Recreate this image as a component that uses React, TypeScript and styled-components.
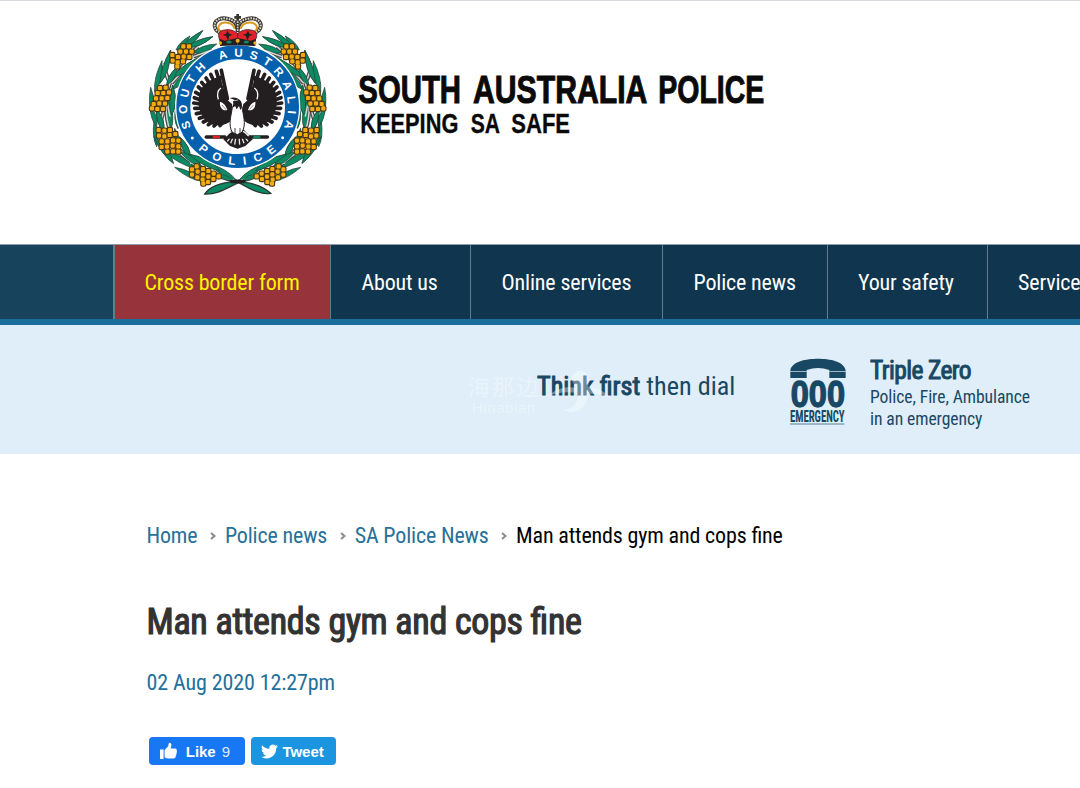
import React from 'react';
import styled, { createGlobalStyle } from 'styled-components';

const GlobalStyle = createGlobalStyle`
  * { box-sizing: border-box; }
  body {
    margin: 0;
    background: #fff;
    font-family: 'Roboto Condensed', Roboto, sans-serif;
    font-stretch: 75%;
    font-size: 22px;
    letter-spacing: -0.16px;
    font-feature-settings: 'liga' 1;
    overflow: hidden;
  }
  a { color: inherit; text-decoration: none; }
  h1, h2, p { margin: 0; font-weight: 400; }
`;

const Page = styled.div`
  width: 1080px;
  height: 788px;
  overflow: hidden;
  display: flex;
  flex-direction: column;
`;

const Header = styled.header`
  height: 244px;
  flex: none;
  padding-left: 140px;
  border-top: 1px solid #d9d9df;
`;

const Logo = styled.svg`
  display: block;
  width: 640px;
  height: 205px;
  letter-spacing: 0;
  overflow: visible;
`;

const Nav = styled.nav`
  flex: none;
  display: flex;
  height: 81px;
  padding-left: 113px;
  background: #17435c;
  border-top: 1px solid #8b9ea9;
  border-bottom: 6px solid #1b6d9c;
  white-space: nowrap;
`;

const NavItem = styled.a<{ $w: number; $alert?: boolean }>`
  flex: none;
  width: ${p => p.$w}px;
  display: flex;
  align-items: center;
  padding: 0 0 0 ${p => (p.$alert ? 29.5 : 30.5)}px;
  border-left: ${p => (p.$alert ? 2 : 1)}px solid #617e8f;
  background: ${p => (p.$alert ? '#97333a' : '#10354e')};
  color: ${p => (p.$alert ? '#fff200' : '#fff')};
`;

const Emergency = styled.section`
  position: relative;
  flex: none;
  height: 129px;
  display: flex;
  align-items: flex-start;
  padding-left: 537px;
  background: #dfeef9;
  color: #184863;
`;

const Dial = styled.p`
  width: 253px;
  padding-top: 46px;
  font-size: 26.2px;
  line-height: 30px;
  letter-spacing: 0;
`;

const Strong = styled.strong<{ $ls: number }>`
  font-weight: 400;
  letter-spacing: ${p => p.$ls}px;
  -webkit-text-stroke: 1px currentColor;
`;

const Phone = styled.svg`
  width: 56px;
  height: 68px;
  margin-top: 33px;
  letter-spacing: 0;
  overflow: visible;
`;

const Contact = styled.div`
  margin: 30px 0 0 24px;
  font-size: 17.6px;
  line-height: 22px;
  letter-spacing: -0.08px;
`;

const ContactName = styled.h2`
  font-size: 25.5px;
  line-height: 31px;
`;

const Watermark = styled.svg`
  position: absolute;
  left: 462px;
  top: 40px;
  width: 160px;
  height: 60px;
`;

const Main = styled.main`
  padding: 68px 0 0 146.5px;
`;

const Breadcrumbs = styled.nav`
  display: flex;
  align-items: center;
  line-height: 28px;
  color: #287098;
`;

const Chevron = styled.svg`
  width: 6px;
  height: 8px;
  margin: 0 9px 0 12.5px;
`;

const Current = styled.span`
  color: #000;
`;

const Title = styled.h1`
  margin-top: 48px;
  font-size: 36px;
  line-height: 48px;
  letter-spacing: -0.3px;
  color: #333;
  -webkit-text-stroke: 1.2px #333;
`;

const Stamp = styled.p`
  margin-top: 23px;
  line-height: 28px;
  letter-spacing: -0.1px;
  color: #1f709c;
`;

const Social = styled.div`
  display: flex;
  gap: 6.5px;
  margin: 40px 0 0 2.5px;
`;

const SocialButton = styled.a<{ $w: number; $bg: string }>`
  display: flex;
  align-items: center;
  width: ${p => p.$w}px;
  height: 28px;
  padding-left: 10px;
  border-radius: 4px;
  background: ${p => p.$bg};
  color: #fff;
  font: 700 15px 'Liberation Sans', Arial, sans-serif;
  svg { flex: none; }
`;

const Label = styled.span<{ $gap: number }>`
  margin-left: ${p => p.$gap}px;
  letter-spacing: -0.05px;
`;

const Count = styled.span`
  margin-left: 6px;
  font-weight: 400;
  opacity: 0.85;
`;

type Leaf = [number, number, number, number, number];

const LEAVES: Leaf[] = [
  [120, 150, 188, 92, 14], [108, 150, 150, 108, 12], [140, 142, 218, 110, 14], [160, 158, 230, 132, 16],
  [90, 235, 205, 158, 17], [95, 270, 170, 190, 18], [60, 250, 92, 150, 15], [44, 275, 66, 182, 15],
  [80, 255, 112, 200, 14], [36, 345, 32, 262, 13], [95, 345, 98, 255, 16], [50, 380, 30, 318, 13],
  [70, 395, 48, 325, 15], [92, 390, 84, 300, 16], [114, 385, 108, 320, 14], [50, 440, 42, 365, 13],
  [100, 490, 42, 410, 15], [116, 465, 104, 385, 15], [150, 475, 118, 410, 15], [165, 505, 66, 450, 16],
  [185, 500, 120, 455, 16], [180, 542, 104, 502, 14], [240, 512, 145, 462, 16], [290, 542, 200, 488, 14],
  [285, 546, 225, 520, 10],
];

const STEMS = [
  'M292 545 Q180 520 120 450 Q70 380 80 290 Q90 210 175 140',
  'M160 170 L215 150', 'M85 240 L68 190', 'M95 250 L130 210', 'M78 310 L60 372', 'M90 350 L82 310',
  'M120 460 L170 500', 'M110 450 L80 462', 'M230 518 L290 545', 'M150 490 L195 480',
];

const CLUSTERS: [number, number][][] = [
  [[130, 139], [147, 139], [121, 155], [138, 155], [155, 155], [114, 171], [131, 170], [148, 171], [97, 165], [98, 182], [113, 187], [129, 184], [112, 199]],
  [[60, 264], [77, 263], [53, 279], [70, 279], [87, 277], [48, 295], [65, 295], [82, 294], [41, 312], [58, 310], [75, 311], [52, 327], [69, 327], [36, 325]],
  [[56, 390], [73, 392], [90, 390], [57, 407], [73, 409], [89, 405], [106, 402], [65, 424], [82, 424], [99, 421], [115, 422], [65, 441], [81, 440], [98, 437], [115, 439], [82, 455], [99, 454], [115, 455]],
  [[170, 499], [156, 508], [173, 515], [189, 507], [205, 513], [156, 524], [172, 532], [189, 523], [205, 530], [221, 521], [188, 539], [204, 546], [220, 537], [236, 529], [190, 551]],
];

function leafPath([x1, y1, x2, y2, w]: Leaf) {
  const dx = x2 - x1;
  const dy = y2 - y1;
  const l = Math.hypot(dx, dy);
  const nx = (-dy / l) * w * 1.25;
  const ny = (dx / l) * w * 1.25;
  const mx = x1 + dx * 0.4;
  const my = y1 + dy * 0.4;
  return `M${x1} ${y1}Q${mx + nx} ${my + ny} ${x2} ${y2}Q${mx - nx * 0.7} ${my - ny * 0.7} ${x1} ${y1}Z`;
}

function WreathHalf() {
  return (
    <g>
      {STEMS.map(d => <path key={d} d={d} fill="none" stroke="#4a4a48" strokeWidth="12" />)}
      {LEAVES.map((l, i) => (
        <path key={i} d={leafPath(l)} fill="#0d8a63" stroke="#24483b" strokeWidth="2.4" />
      ))}
      {STEMS.map(d => <path key={d} d={d} fill="none" stroke="#d4d6d4" strokeWidth="4.500" />)}
      {LEAVES.filter((_, i) => i % 2 === 0).map((l, i) => (
        <path key={i} d={leafPath(l)} fill="#0d8a63" stroke="#24483b" strokeWidth="2" />
      ))}
      {CLUSTERS.map((c, i) => (
        <g key={i}>
          {c.map(([x, y]) => <rect key={`b${x}-${y}`} x={x - 9.5} y={y - 9.5} width="19" height="19" rx="6" fill="#4a3610" />)}
          {c.map(([x, y]) => <rect key={`f${x}-${y}`} x={x - 6.2} y={y - 6.2} width="12.4" height="12.4" rx="3.5" fill="#f3ab14" />)}
        </g>
      ))}
    </g>
  );
}

const FEATHERS: [number, number, number, number][] = [
  [262, 296, 244, 211], [256, 300, 229, 214], [250, 304, 212, 223], [245, 308, 198, 234], [240, 312, 185, 247],
  [236, 314, 175, 261], [234, 316, 167, 277], [234, 318, 163, 293], [236, 320, 161, 309], [238, 324, 164, 325],
  [240, 328, 169, 341], [244, 332, 178, 355], [248, 336, 190, 366], [254, 338, 205, 374], [260, 342, 222, 378], [266, 346, 240, 377],
];

function Wing() {
  return (
    <g>
      {FEATHERS.map(([a, b, c, d]) => (
        <line key={`${c}-${d}`} x1={a} y1={b} x2={c} y2={d} stroke="#231f20" strokeWidth="11" strokeLinecap="round" />
      ))}
      <path d="M247 225C240 255 246 290 276 312L284 350C262 382 222 380 204 367C178 348 170 310 180 274C192 244 222 236 247 225Z" fill="#231f20" />
      <path d="M243 264C234 270 231 284 235 298" fill="none" stroke="#fff" strokeWidth="4" />
      <path d="M240 305C238 322 248 334 262 330C258 316 250 308 240 305Z" fill="#fff" />
      <path d="M246 315L258 329" stroke="#231f20" strokeWidth="1.5" />
    </g>
  );
}

function CrownHalf() {
  return (
    <g>
      <path d="M246 100C208 88 222 48 262 56C282 60 292 70 292 88" fill="none" stroke="#38342e" strokeWidth="12" />
      <path d="M246 100C208 88 222 48 262 56C282 60 292 70 292 88" fill="none" stroke="#d9d4ca" strokeWidth="6" strokeDasharray="5 3" />
      <path d="M242 94C226 84 240 64 262 68C276 70 282 78 284 86" fill="none" stroke="#d99a1c" strokeWidth="6" />
      <path d="M240 120C230 104 238 90 254 90C268 86 282 92 293 100L293 128L242 132Z" fill="#e0242b" stroke="#231f20" strokeWidth="2" />
      <path d="M262 92L268 102L278 104L268 108L264 122L258 108L248 105L258 101Z" fill="#231f20" />
      <path d="M238 116L254 122L293 114L293 136L240 138Z" fill="#231f20" />
      <circle cx="241" cy="129" r="5" fill="#f3ab14" />
      <ellipse cx="267" cy="126" rx="8" ry="4.5" fill="#0d8a63" />
    </g>
  );
}

function Mirrored({ children }: { children: React.ReactNode }) {
  return (
    <>
      {children}
      <g transform="translate(586 0) scale(-1 1)">{children}</g>
    </>
  );
}

const WORDMARK: { word: string; x: number; w: number }[] = [
  { word: 'SOUTH', x: 655, w: 308 },
  { word: 'AUSTRALIA', x: 999, w: 523 },
  { word: 'POLICE', x: 1555, w: 318 },
];

const TAGLINE: { word: string; x: number; w: number }[] = [
  { word: 'KEEPING', x: 661, w: 294 },
  { word: 'SA', x: 992, w: 88 },
  { word: 'SAFE', x: 1114, w: 176 },
];

function PoliceLogo() {
  return (
    <Logo viewBox="0 3 1920 615" aria-label="South Australia Police">
      <defs>
        <path id="ring-top" d="M153.5 382A151.500 151.500 0 1 1 433 379" />
        <path id="ring-bottom" d="M174 448A176 176 0 0 0 413 448" />
      </defs>
      <path d="M392 580C360 550 320 548 288 544C240 548 208 560 194 582C235 584 262 562 296 548C330 566 362 586 392 580Z" fill="#0d8a63" stroke="#2c3b34" strokeWidth="4" />
      <Mirrored><WreathHalf /></Mirrored>
      <path d="M268 540L318 540L312 550L274 550Z" fill="#231f20" />
      <circle cx="293" cy="320" r="188" fill="#fff" />
      <circle cx="293" cy="320" r="163" fill="none" stroke="#0561ad" strokeWidth="42" />
      <g fill="#fff" fontFamily="'Liberation Sans', Arial, sans-serif" fontWeight="700" fontSize="35">
        <text><textPath href="#ring-top" textLength="600" lengthAdjust="spacing">SOUTH AUSTRALIA</textPath></text>
        <text><textPath href="#ring-bottom" textLength="258" lengthAdjust="spacing">POLICE</textPath></text>
      </g>
      <circle cx="157" cy="414" r="4.5" fill="#fff" />
      <circle cx="428" cy="413" r="4.5" fill="#fff" />
      <Mirrored><CrownHalf /></Mirrored>
      <path d="M289 42H297V48H303V56H297V62H289V56H283V48H289Z" fill="#38342e" />
      <rect x="287" y="62" width="12" height="34" fill="#38342e" />
      <path d="M293 64V94" stroke="#d9d4ca" strokeWidth="5" strokeDasharray="5 3" />
      <circle cx="293" cy="122" r="6" fill="#f3ab14" />

      <Mirrored><Wing /></Mirrored>
      <path d="M250 418L276 388L310 388L338 418L316 438L293 446L270 438Z" fill="#231f20" />
      <path d="M262 424L274 408M272 430L281 408M284 434L288 408M299 434L297 408M312 430L304 408M324 424L312 408" stroke="#e8e8e8" strokeWidth="4" />
      <path d="M199 411H382" stroke="#231f20" strokeWidth="11" strokeLinecap="round" />
      <path d="M218 411H240" stroke="#d8232a" strokeWidth="8" />
      <path d="M340 411H361" stroke="#0d8a63" strokeWidth="8" />
      <path d="M258 408C266 402 268 396 275 394M326 408C318 402 316 396 309 394" fill="none" stroke="#fff" strokeWidth="4" />
      <path d="M277 322C273 350 264 375 277 397L292 404L306 397C320 372 309 345 306 320L292 312Z" fill="#fff" stroke="#231f20" strokeWidth="3" />
      <path d="M285 384V402M300 384V402" stroke="#231f20" strokeWidth="2.5" />
      <path d="M269 294C280 290 296 292 303 304C308 314 306 326 301 330L297 318L290 328L285 317L278 323L280 309C276 304 284 302 286 301Z" fill="#231f20" />
      <path d="M284 302L294 300" stroke="#fff" strokeWidth="2" />

      <g fill="#0a0a0a" fontFamily="'Liberation Sans', Arial, sans-serif" fontWeight="700" stroke="#0a0a0a">
        {WORDMARK.map(t => (
          <text key={t.word} x={t.x} y="308" fontSize="118" textLength={t.w} lengthAdjust="spacingAndGlyphs" strokeWidth="3">{t.word}</text>
        ))}
        {TAGLINE.map(t => (
          <text key={t.word} x={t.x} y="400" fontSize="82" textLength={t.w} lengthAdjust="spacingAndGlyphs" strokeWidth="1">{t.word}</text>
        ))}
      </g>
    </Logo>
  );
}

const NAV: { label: string; w: number; alert?: boolean }[] = [
  { label: 'Cross border form', w: 217, alert: true },
  { label: 'About us', w: 140 },
  { label: 'Online services', w: 192 },
  { label: 'Police news', w: 164.5 },
  { label: 'Your safety', w: 160 },
  { label: 'Services', w: 140 },
];

const CRUMBS = ['Home', 'Police news', 'SA Police News'];

export default function App() {
  return (
    <Page>
      <GlobalStyle />
      <Header><PoliceLogo /></Header>
      <Nav>
        {NAV.map(n => <NavItem key={n.label} href="#" $w={n.w} $alert={n.alert}>{n.label}</NavItem>)}
      </Nav>
      <Emergency>
        <Dial><Strong $ls={0}>Think first</Strong> then dial</Dial>
        <Phone viewBox="0 0 168 204" fill="#184863">
          <path d="M1 38C4 10 50 2 84 2S164 10 167 38V60H118V36Q84 24 50 36V60H1Z" />
          <path d="M0 40.500H50M118 40.500H168" stroke="#dfeef9" strokeWidth="2" />
          <text x="2" y="147" fontSize="112" fontFamily="'Liberation Sans', Arial, sans-serif" fontWeight="700" textLength="163" lengthAdjust="spacingAndGlyphs" stroke="#184863" strokeWidth="4">000</text>
          <text x="0" y="193" fontSize="49" fontWeight="700" textLength="164" lengthAdjust="spacingAndGlyphs">EMERGENCY</text>
          <path d="M0 198H163" stroke="#184863" strokeWidth="2" />
        </Phone>
        <Contact>
          <ContactName><Strong $ls={-0.6}>Triple Zero</Strong></ContactName>
          <p>Police, Fire, Ambulance</p>
          <p>in an emergency</p>
        </Contact>
        <Watermark viewBox="462 365 160 60" fill="#fff">
          <g opacity="0.36">
            <text x="468" y="395" fontSize="22" textLength="70" fontFamily="'Noto Sans CJK SC', sans-serif">海那边</text>
            <text x="472" y="413" fontSize="15" textLength="63" fontFamily="'Liberation Sans', sans-serif">Hinabian</text>
            <path d="M546 397C558 387 567 386 577 388C566 377 575 369 583 371C589 373 590 380 588 387C596 387 603 390 611 398C602 394 594 393 588 394C588 408 574 417 562 409C572 411 579 403 577 393C567 391 555 393 546 397Z" />
          </g>
        </Watermark>
      </Emergency>
      <Main>
        <Breadcrumbs>
          {CRUMBS.map(c => (
            <React.Fragment key={c}>
              <a href="#">{c}</a>
              <Chevron viewBox="0 0 6 8"><path d="M1 1L4.500 4L1 7" fill="none" stroke="#8a8a8a" strokeWidth="2" /></Chevron>
            </React.Fragment>
          ))}
          <Current>Man attends gym and cops fine</Current>
        </Breadcrumbs>
        <Title>Man attends gym and cops fine</Title>
        <Stamp>02 Aug 2020 12:27pm</Stamp>
        <Social>
          <SocialButton href="#" $w={95.5} $bg="#1877f2">
            <svg width="19" height="18" viewBox="0 0 19 18" fill="#fff">
              <path d="M1 7.500H4.600V17H1ZM5.600 8L9.200 4.200L9.700 1.400Q10.300 0.300 11.600 1.100Q13 2.300 12.200 4.600L11.600 6.600H16.400Q18.300 7 17.700 8.800Q18.500 10 17.400 11.300Q17.900 12.700 16.800 13.700Q17 16.200 14.800 16.500H9.500Q7.500 16.500 5.600 15.300Z" />
            </svg>
            <Label $gap={7.8}>Like</Label><Count>9</Count>
          </SocialButton>
          <SocialButton href="#" $w={84.5} $bg="#1b95e0">
            <svg width="17" height="17" viewBox="0 0 24 24" fill="#fff">
              <path d="M23.950 4.570a10 10 0 0 1-2.820.770 4.960 4.960 0 0 0 2.160-2.720c-.950.550-2 .960-3.130 1.180a4.920 4.920 0 0 0-8.380 4.480C7.690 8.090 4.070 6.130 1.640 3.160a4.820 4.820 0 0 0-.670 2.480c0 1.710.870 3.210 2.190 4.100a4.900 4.900 0 0 1-2.230-.620v.060a4.920 4.920 0 0 0 3.950 4.830 5 5 0 0 1-2.210.080 4.940 4.940 0 0 0 4.600 3.420A9.870 9.870 0 0 1 0 19.540a13.990 13.990 0 0 0 7.550 2.210c9.050 0 14-7.500 14-13.980 0-.210 0-.420-.020-.630a9.940 9.940 0 0 0 2.460-2.550z" />
            </svg>
            <Label $gap={4.5}>Tweet</Label>
          </SocialButton>
        </Social>
      </Main>
    </Page>
  );
}
